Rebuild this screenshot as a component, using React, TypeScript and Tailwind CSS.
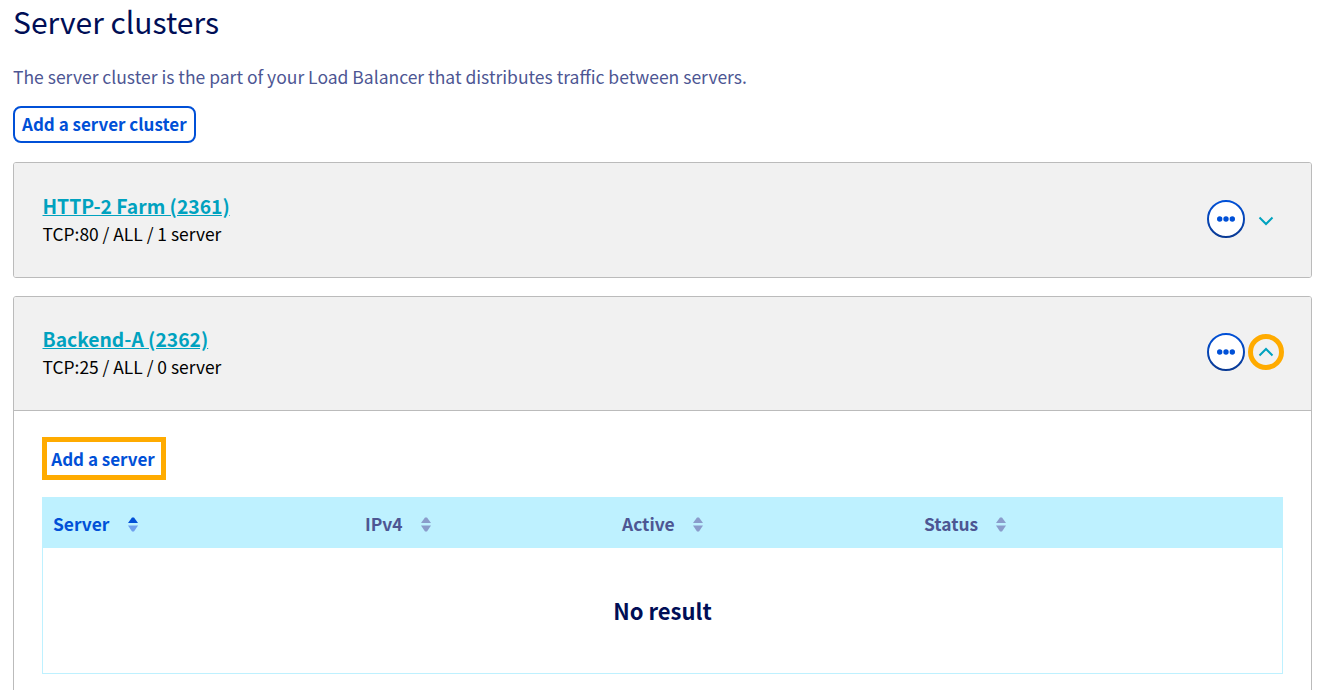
const font = { fontFamily: '"Noto Sans CJK SC", "Noto Sans", sans-serif' };

function SortIcon({ active = false }: { active?: boolean }) {
  const top = active ? "#0050d7" : "#8a9ccb";
  const bottom = active ? "#6ea0ee" : "#8a9ccb";
  return (
    <svg width="10" height="15" viewBox="0 0 10 15" className={active ? "shrink-0 mt-[1px] ml-[1px]" : "shrink-0 mt-[1px]"}>
      <path d="M4 0.5 H6 L10 6 H0 Z" fill={top} />
      <path d="M0 8.5 H10 L6 14.5 H4 Z" fill={bottom} />
    </svg>
  );
}

function MoreButton({ id }: { id: string }) {
  return (
    <svg width="38" height="38" viewBox="0 0 38 38" className="shrink-0">
      <defs>
        <linearGradient id={id} x1="0" y1="0" x2="0" y2="1">
          <stop offset="0" stopColor="#0050d7" />
          <stop offset="1" stopColor="#0a3a94" />
        </linearGradient>
      </defs>
      <circle cx="19" cy="19" r="18" fill="#ffffff" stroke={`url(#${id})`} strokeWidth="2" />
      <circle cx="12.7" cy="19" r="2.7" fill="#0050d7" />
      <circle cx="19" cy="19" r="2.7" fill="#0050d7" />
      <circle cx="25.3" cy="19" r="2.7" fill="#0050d7" />
    </svg>
  );
}

function Chevron({ up = false }: { up?: boolean }) {
  return (
    <svg width="16" height="10" viewBox="0 0 16 10" fill="none" className={up ? "" : "mt-[5px]"}>
      <path d={up ? "M1.5 8.5 L8 2 L14.5 8.5" : "M1.5 1.5 L8 8 L14.5 1.5"} stroke="#00a2bf" strokeWidth="2" />
    </svg>
  );
}

function CardHeader({ title, sub, id, open = false }: { title: string; sub: string; id: string; open?: boolean }) {
  return (
    <div className={open ? "h-[113px] bg-[#f1f1f1] flex items-center pl-[28.5px] pr-[27px]" : "h-[114px] bg-[#f1f1f1] flex items-center pl-[28.5px] pr-[27px]"}>
      <div className="flex-1 -mt-[1px]">
        <div className="text-[19.3px] leading-[28px] font-semibold text-[#00a2bf] underline">{title}</div>
        <div className="text-[17.4px] leading-[28px] text-black">{sub}</div>
      </div>
      <div className={open ? "flex items-center gap-[3px] -mt-[3px]" : "flex items-center gap-[3px] -mt-[3px]"}>
        <MoreButton id={id} />
        <div className={open ? "w-[36px] h-[36px] rounded-full border-[5px] border-[#ffab00] flex items-center justify-center" : "w-[36px] h-[36px] flex items-center justify-center"}>
          <Chevron up={open} />
        </div>
      </div>
    </div>
  );
}

export default function App() {
  const cols = [
    { label: "Server", w: "w-[312px]", active: true },
    { label: "IPv4", w: "w-[257px]" },
    { label: "Active", w: "w-[302px]" },
    { label: "Status", w: "flex-1" },
  ];
  return (
    <div style={font} className="h-[690px] overflow-hidden bg-white pl-[13px] pr-[11px]">
      <h1 className="text-[30px] leading-[42px] text-[#000e56] font-normal">Server clusters</h1>
      <p className="mt-[22px] text-[17.5px] leading-[26px] text-[#4d5693]">
        The server cluster is the part of your Load Balancer that distributes traffic between servers.
      </p>
      <button className="mt-[16px] h-[37px] px-[7px] pb-[2px] rounded-[8px] border-2 border-[#0050d7] text-[17px] font-semibold text-[#0050d7] bg-white block">
        Add a server cluster
      </button>
      <div className="mt-[19px] rounded-[3px] border border-[#bbbbbb] overflow-hidden">
        <CardHeader id="g1" title="HTTP-2 Farm (2361)" sub="TCP:80 / ALL / 1 server" />
      </div>
      <div className="mt-[18px] rounded-[3px] border border-[#bbbbbb] overflow-hidden h-[500px]">
        <CardHeader id="g2" title="Backend-A (2362)" sub="TCP:25 / ALL / 0 server" open />
        <div className="border-t border-[#bbbbbb] bg-white pl-[28px] pr-[28px] pt-[26px]">
          <button className="h-[43px] w-[124px] border-[5px] border-[#ffab00] pr-[2px] text-[17px] font-semibold text-[#0050d7] bg-white block">
            Add a server
          </button>
          <div className="mt-[17px]">
            <div className="h-[51px] bg-[#bef1ff] flex items-center pl-[11px] pt-[3px]">
              {cols.map((c) => (
                <div key={c.label} className={`${c.w} flex items-center gap-[18px]`}>
                  <span className={c.active ? "text-[17.4px] font-semibold text-[#0050d7]" : "text-[17.4px] font-semibold text-[#4d5693]"}>{c.label}</span>
                  <SortIcon active={c.active} />
                </div>
              ))}
            </div>
            <div className="h-[126px] border border-t-0 border-[#bef1ff] flex items-center justify-center">
              <span className="text-[22px] font-semibold text-[#000e56]">No result</span>
            </div>
          </div>
        </div>
      </div>
    </div>
  );
}
